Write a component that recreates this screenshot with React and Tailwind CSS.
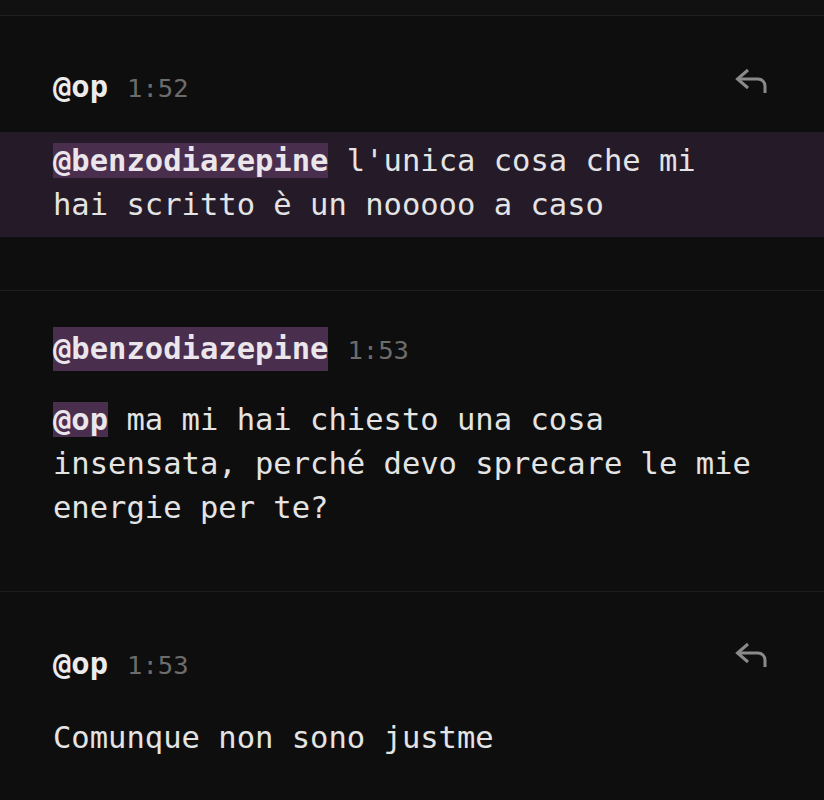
import React from 'react';

const mono = "font-['DejaVu_Sans_Mono','Liberation_Mono',monospace]";

function ReplyIcon() {
  return (
    <svg width="32" height="26" viewBox="0 0 32 26" fill="none" stroke="#8a8a8a" strokeWidth="3">
      <path d="M13 2 L2.5 11 L13 20" />
      <path d="M2.5 11 H23 A7 7 0 0 1 30 18 V25" />
    </svg>
  );
}

function Mention({ children, block }) {
  return (
    <span className={`bg-[#4a2e4d] font-bold text-[#ebe6ec] ${block ? 'inline-block leading-[44px]' : ''}`}>
      {children}
    </span>
  );
}

function Time({ children }) {
  return <span className="ml-[19px] text-[25.5px] text-[#6c6c6c]">{children}</span>;
}

export default function App() {
  return (
    <div className={`min-h-screen bg-[#0e0e0e] text-[30.5px] leading-[44px] text-[#e4e4e4] ${mono}`}>
      <div className="h-[16px] bg-[#111111] border-b border-[#1e1e1e]" />

      {/* mensaje 1 */}
      <div className="pt-[49px] pb-[53px]">
        <div className="flex items-start justify-between pl-[53px] pr-[57px]">
          <div>
            <span className="font-bold text-[#ebebeb]">@op</span>
            <Time>1:52</Time>
          </div>
          <div className="mt-[3px]">
            <ReplyIcon />
          </div>
        </div>
        <div className="mt-[22px] bg-[#251a27] pt-[7px] pb-[10px] pl-[53px] pr-[63px]">
          <Mention>@benzodiazepine</Mention> l'unica cosa che mi hai scritto è un nooooo a caso
        </div>
      </div>

      {/* mensaje 2 */}
      <div className="border-t border-[#1e1e1e] pt-[36px] pb-[61px] pl-[53px] pr-[63px]">
        <div>
          <Mention block>@benzodiazepine</Mention>
          <Time>1:53</Time>
        </div>
        <div className="mt-[26px]">
          <Mention>@op</Mention> ma mi hai chiesto una cosa insensata, perché devo sprecare le mie energie per te?
        </div>
      </div>

      {/* mensaje 3 */}
      <div className="border-t border-[#1e1e1e] pt-[50px] pb-[40px]">
        <div className="flex items-start justify-between pl-[53px] pr-[57px]">
          <div>
            <span className="font-bold text-[#ebebeb]">@op</span>
            <Time>1:53</Time>
          </div>
          <div>
            <ReplyIcon />
          </div>
        </div>
        <div className="mt-[29px] pl-[53px] pr-[63px]">Comunque non sono justme</div>
      </div>
    </div>
  );
}
